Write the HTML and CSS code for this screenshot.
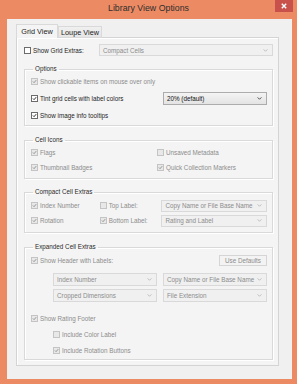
FILE: index.html
```html
<!DOCTYPE html>
<html lang="en">
<head>
    <meta charset="UTF-8">
    <meta name="viewport" content="width=device-width, initial-scale=1.0">
    <title>Library View Options</title>
    <link rel="stylesheet" href="styles.css">
</head>
<body>
<div class="window">
    <div class="titlebar">
        <span></span>
        <span class="title">Library View Options</span>
        <span class="close-btn">
            <svg width="6" height="6" viewBox="0 0 6 6"><path d="M0.8 0.8 L5.2 5.2 M5.2 0.8 L0.8 5.2" stroke="#fff" stroke-width="1.4"/></svg>
        </span>
    </div>

    <div class="client">
        <div class="tabs">
            <div class="tab active">Grid View</div>
            <div class="tab">Loupe View</div>
        </div>

        <div class="panel">
            <!-- top row -->
            <div class="extras-row">
                <span class="check"><span class="cb"></span>Show Grid Extras:</span>
                <div class="select off extras-select">Compact Cells<svg class="chev" viewBox="0 0 6 4"><polyline points="0.5,0.5 3,3 5.5,0.5"/></svg></div>
            </div>

            <!-- Options -->
            <fieldset class="group options">
                <legend>Options</legend>
                <div class="row">
                    <span class="check off"><span class="cb on"><svg viewBox="0 0 7 7"><polyline points="1.3,3.5 2.9,5.1 5.9,1.6"/></svg></span>Show clickable items on mouse over only</span>
                </div>
                <div class="row spread">
                    <span class="check"><span class="cb on"><svg viewBox="0 0 7 7"><polyline points="1.3,3.5 2.9,5.1 5.9,1.6"/></svg></span>Tint grid cells with label colors</span>
                    <div class="select tint-select">20% (default)<svg class="chev" viewBox="0 0 6 4"><polyline points="0.5,0.5 3,3 5.5,0.5"/></svg></div>
                </div>
                <div class="row">
                    <span class="check"><span class="cb on"><svg viewBox="0 0 7 7"><polyline points="1.3,3.5 2.9,5.1 5.9,1.6"/></svg></span>Show image info tooltips</span>
                </div>
            </fieldset>

            <!-- Cell Icons -->
            <fieldset class="group cell-icons">
                <legend>Cell Icons</legend>
                <div class="row">
                    <span class="check off col-a"><span class="cb on"><svg viewBox="0 0 7 7"><polyline points="1.3,3.5 2.9,5.1 5.9,1.6"/></svg></span>Flags</span>
                    <span class="check off"><span class="cb"></span>Unsaved Metadata</span>
                </div>
                <div class="row">
                    <span class="check off col-a"><span class="cb on"><svg viewBox="0 0 7 7"><polyline points="1.3,3.5 2.9,5.1 5.9,1.6"/></svg></span>Thumbnail Badges</span>
                    <span class="check off"><span class="cb on"><svg viewBox="0 0 7 7"><polyline points="1.3,3.5 2.9,5.1 5.9,1.6"/></svg></span>Quick Collection Markers</span>
                </div>
            </fieldset>

            <!-- Compact Cell Extras -->
            <fieldset class="group compact">
                <legend>Compact Cell Extras</legend>
                <div class="row">
                    <span class="check off col-b"><span class="cb on"><svg viewBox="0 0 7 7"><polyline points="1.3,3.5 2.9,5.1 5.9,1.6"/></svg></span>Index Number</span>
                    <span class="check off col-c"><span class="cb"></span>Top Label:</span>
                    <div class="select off compact-select">Copy Name or File Base Name<svg class="chev" viewBox="0 0 6 4"><polyline points="0.5,0.5 3,3 5.5,0.5"/></svg></div>
                </div>
                <div class="row">
                    <span class="check off col-b"><span class="cb on"><svg viewBox="0 0 7 7"><polyline points="1.3,3.5 2.9,5.1 5.9,1.6"/></svg></span>Rotation</span>
                    <span class="check off col-c"><span class="cb on"><svg viewBox="0 0 7 7"><polyline points="1.3,3.5 2.9,5.1 5.9,1.6"/></svg></span>Bottom Label:</span>
                    <div class="select off compact-select">Rating and Label<svg class="chev" viewBox="0 0 6 4"><polyline points="0.5,0.5 3,3 5.5,0.5"/></svg></div>
                </div>
            </fieldset>

            <!-- Expanded Cell Extras -->
            <fieldset class="group expanded">
                <legend>Expanded Cell Extras</legend>
                <div class="row spread">
                    <span class="check off"><span class="cb on"><svg viewBox="0 0 7 7"><polyline points="1.3,3.5 2.9,5.1 5.9,1.6"/></svg></span>Show Header with Labels:</span>
                    <span class="btn-off">Use Defaults</span>
                </div>
                <div class="label-grid">
                    <div class="select off">Index Number<svg class="chev" viewBox="0 0 6 4"><polyline points="0.5,0.5 3,3 5.5,0.5"/></svg></div>
                    <div class="select off">Copy Name or File Base Name<svg class="chev" viewBox="0 0 6 4"><polyline points="0.5,0.5 3,3 5.5,0.5"/></svg></div>
                    <div class="select off">Cropped Dimensions<svg class="chev" viewBox="0 0 6 4"><polyline points="0.5,0.5 3,3 5.5,0.5"/></svg></div>
                    <div class="select off">File Extension<svg class="chev" viewBox="0 0 6 4"><polyline points="0.5,0.5 3,3 5.5,0.5"/></svg></div>
                </div>
                <div class="row footer-row">
                    <span class="check off"><span class="cb on"><svg viewBox="0 0 7 7"><polyline points="1.3,3.5 2.9,5.1 5.9,1.6"/></svg></span>Show Rating Footer</span>
                </div>
                <div class="row sub">
                    <span class="check off"><span class="cb"></span>Include Color Label</span>
                </div>
                <div class="row sub">
                    <span class="check off"><span class="cb on"><svg viewBox="0 0 7 7"><polyline points="1.3,3.5 2.9,5.1 5.9,1.6"/></svg></span>Include Rotation Buttons</span>
                </div>
            </fieldset>
        </div>
    </div>
</div>
</body>
</html>
```

FILE: styles.css
```css
body {
    margin: 0;
    font-family: "Liberation Sans", Arial, sans-serif;
    font-size: 6.3px;
    color: #1e1e1e;
}
.window {
    width: 297px;
    height: 384px;
    background-color: #ec8b63;
    display: flex;
    flex-direction: column;
}
.titlebar {
    height: 19px;
    display: grid;
    grid-template-columns: 1fr auto 1fr;
}
.title {
    font-size: 8.8px;
    line-height: 17px;
    color: #2e2e2e;
}
.close-btn {
    justify-self: end;
    width: 18px;
    height: 12px;
    margin-right: 4px;
    background-color: #c9514b;
    display: flex;
    align-items: center;
    justify-content: center;
}
.client {
    flex: 1;
    margin: 0 5px 5px 7px;
    background-color: #f0f0f0;
    padding: 5px 13px 0 9px;
}

/* Tabs */
.tabs {
    display: flex;
    align-items: flex-end;
    height: 14px;
    margin-bottom: -1px;
    position: relative;
    z-index: 1;
}
.tab {
    box-sizing: border-box;
    height: 12px;
    width: 44px;
    border: 1px solid #d9d9d9;
    background: linear-gradient(#f0f0f0, #e5e5e5);
    font-size: 7.3px;
    line-height: 11px;
    text-align: center;
    color: #1e1e1e;
}
.tab.active {
    height: 14px;
    width: 42px;
    border-bottom: none;
    background: #f4f4f4;
    line-height: 13px;
}

/* Panel */
.panel {
    border: 1px solid #d4d4d4;
    background-color: #f4f4f4;
    padding: 6px 5px 5px 7px;
    box-shadow: inset 1px 1px 0 #fff;
}
.extras-row {
    display: flex;
    align-items: center;
    height: 12px;
}
.extras-select {
    margin-left: auto;
    width: 174px;
}

/* Checkboxes */
.check {
    display: inline-flex;
    align-items: center;
    white-space: nowrap;
}
.cb {
    box-sizing: border-box;
    width: 7px;
    height: 7px;
    border: 1px solid #6b6b6b;
    background-color: #fff;
    margin-right: 2px;
    flex: none;
    display: flex;
}
.cb svg {
    width: 5px;
    height: 5px;
    fill: none;
    stroke: #202020;
    stroke-width: 1.3;
}
.check.off {
    color: #8c8c8c;
}
.check.off .cb {
    border-color: #c4c4c4;
    background-color: #e8e8e8;
}
.check.off .cb svg {
    stroke: #8e8e8e;
}

/* Dropdowns */
.select {
    box-sizing: border-box;
    height: 13px;
    border: 1px solid #acacac;
    background: linear-gradient(#f4f4f4, #e3e3e3);
    display: flex;
    align-items: center;
    padding: 0 4px 0 3px;
    color: #111;
    white-space: nowrap;
}
.select .chev {
    width: 5px;
    height: 3px;
    margin-left: auto;
    fill: none;
    stroke: #333;
    stroke-width: 1.1;
}
.select.off {
    height: 12px;
    border-color: #d9d9d9;
    background: #f0f0f0;
    color: #8c8c8c;
}
.select.off .chev {
    stroke: #b4b4b4;
}
.tint-select {
    width: 104px;
}

/* Group boxes */
.group {
    margin: 0;
    padding: 0 5px 1px 6px;
    border: 1px solid #d9d9d9;
    box-shadow: 1px 1px 0 #fff, inset 1px 1px 0 #fff;
    min-width: 0;
}
.group legend {
    padding: 0 2px;
    margin-left: 2px;
    line-height: 8px;
    color: #2a2a2a;
}
.row {
    display: flex;
    align-items: center;
    height: 15px;
}
.row.spread {
    justify-content: space-between;
}
.options {
    margin-top: 9px;
}
.options .row {
    height: 17px;
}
.cell-icons {
    margin-top: 10px;
    padding-top: 1px;
    padding-bottom: 3px;
}
.col-a {
    width: 126px;
}
.compact {
    margin-top: 9px;
    padding-top: 2px;
    padding-bottom: 4px;
}
.col-b {
    width: 69px;
}
.col-c {
    width: 62px;
}
.compact-select {
    width: 106px;
}
.expanded {
    margin-top: 10px;
    padding-top: 2px;
    padding-bottom: 1px;
}
.btn-off {
    box-sizing: border-box;
    width: 48px;
    height: 11px;
    border: 1px solid #d5d5d5;
    background-color: #f3f3f3;
    color: #8c8c8c;
    display: flex;
    align-items: center;
    justify-content: center;
}
.label-grid {
    display: grid;
    grid-template-columns: 104px 104px;
    column-gap: 6px;
    row-gap: 3px;
    margin: 5px 0 0 22px;
}
.label-grid .select {
    height: 13px;
}
.footer-row {
    margin-top: 9px;
}
.row.sub {
    height: 16px;
    padding-left: 22px;
}
```
